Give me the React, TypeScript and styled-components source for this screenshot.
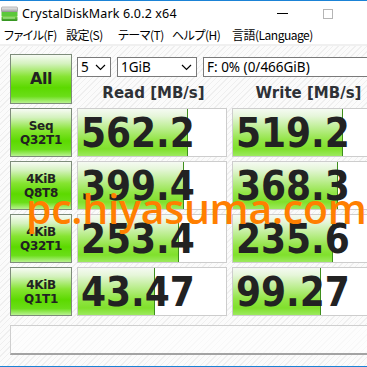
import React from "react";
import styled, { createGlobalStyle } from "styled-components";

const GlobalStyle = createGlobalStyle`
  html, body {
    margin: 0;
    padding: 0;
    overflow: hidden;
    background: #ffffff;
  }
  * { box-sizing: border-box; }
`;

const Window = styled.div`
  position: relative;
  width: 367px;
  height: 367px;
  overflow: hidden;
  border-top: 1px solid #1b83d6;
  border-bottom: 1px solid #1b83d6;
  background: #ffffff;
  font-family: "Noto Sans", "Noto Sans CJK JP", sans-serif;
`;

const TitleBar = styled.div`
  height: 25px;
  display: flex;
  align-items: center;
  padding-left: 1px;
  background: #ffffff;
`;

const TitleText = styled.span`
  margin-left: 4px;
  font-size: 12.5px;
  color: #000;
  letter-spacing: 0.15px;
`;

const WinButtons = styled.div`
  margin-left: auto;
  display: flex;
  align-items: center;
  gap: 35px;
  padding-right: 34px;
`;

const Minimize = styled.div`
  width: 11px;
  height: 1px;
  background: #000;
`;

const Maximize = styled.div`
  width: 10px;
  height: 10px;
  border: 1px solid #b5b5b5;
`;

const MenuBar = styled.div`
  height: 20px;
  display: flex;
  align-items: center;
  gap: 15px;
  padding-left: 4px;
  background: #ffffff;
  border-bottom: 2px solid #f0f0f0;
  font-family: "Noto Sans CJK JP", sans-serif;
  font-size: 12px;
  font-feature-settings: "palt";
  color: #000;
`;

const MenuItem = styled.span<{ $w: number }>`
  width: ${(p) => p.$w}px;
  white-space: nowrap;
  line-height: 1;
  letter-spacing: -0.5px;
`;

const Main = styled.div`
  position: relative;
  padding: 8px 0 0 10px;
  height: 320px;
  background: repeating-linear-gradient(
    135deg,
    #fbfbfb 0px,
    #fbfbfb 3px,
    #efefef 3px,
    #efefef 4px
  );
`;

const Grid = styled.div`
  display: grid;
  grid-template-columns: 62px 150px 150px;
  grid-template-rows: 50px repeat(4, 49px);
  column-gap: 5px;
  row-gap: 4px;
  width: 400px;
`;

const LabelButton = styled.div<{ $big?: boolean }>`
  border: 1px solid #7d8c7a;
  background: linear-gradient(
    to bottom,
    #f7fbf4 0%,
    #d4f2be 18%,
    #86e432 45%,
    #5cd900 68%,
    #6ade18 86%,
    #b8f290 100%
  );
  display: flex;
  flex-direction: column;
  align-items: center;
  justify-content: center;
  font-family: "DejaVu Sans", Verdana, sans-serif;
  font-weight: bold;
  color: #222;
  font-size: ${(p) => (p.$big ? "16px" : "12px")};
  line-height: 14px;
  letter-spacing: ${(p) => (p.$big ? "-0.5px" : "-0.3px")};
`;

const TopArea = styled.div`
  grid-column: 2 / span 2;
  display: flex;
  flex-direction: column;
  padding-top: 3px;
`;

const Selects = styled.div`
  display: flex;
  gap: 6px;
`;

const Select = styled.div<{ $w: number }>`
  width: ${(p) => p.$w}px;
  height: 20px;
  border: 1px solid #7a7a7a;
  background: #fff;
  display: flex;
  align-items: center;
  justify-content: space-between;
  padding: 0 4px 0 3px;
  font-family: "Noto Sans", sans-serif;
  font-size: 13.5px;
  color: #000;
  flex-shrink: 0;
`;

const Headers = styled.div`
  display: grid;
  grid-template-columns: 150px 150px;
  column-gap: 5px;
  margin-top: 6px;
`;

const Header = styled.div`
  text-align: center;
  font-family: "DejaVu Sans", Verdana, sans-serif;
  font-weight: bold;
  font-size: 15px;
  color: #2e3136;
  line-height: 20px;
  padding-left: 3px;
`;

const ValueBox = styled.div`
  position: relative;
  border: 1px solid #cdcdcd;
  background: #ffffff;
  display: flex;
  align-items: center;
  overflow: hidden;
`;

const Bar = styled.div`
  position: absolute;
  left: 0;
  top: 0;
  bottom: 0;
  border-right: 1px solid #3e8e1c;
  background: linear-gradient(
    to bottom,
    #f5faf2 0%,
    #e6f6da 15%,
    #bdee92 40%,
    #94e548 65%,
    #80e02c 85%,
    #9cea5e 100%
  );
`;

const Value = styled.span`
  position: relative;
  padding-left: 3px;
  font-family: "DejaVu Sans Condensed", "DejaVu Sans", sans-serif;
  font-stretch: condensed;
  font-weight: bold;
  font-size: 40px;
  line-height: 1;
  color: #222222;
`;

const Comment = styled.div`
  margin-top: 9px;
  height: 30px;
  width: 370px;
  border-top: 1px solid #cfcfcf;
  border-left: 1px solid #cfcfcf;
  border-bottom: 2px solid #a3a3a3;
  background: rgba(255, 255, 255, 0.55);
`;

const Watermark = styled.div`
  position: absolute;
  left: 26px;
  top: 142px;
  font-family: "Open Sans", "Noto Sans", sans-serif;
  font-weight: 600;
  font-size: 41px;
  line-height: 1;
  color: #ff7f00;
  letter-spacing: -0.3px;
  pointer-events: none;
  white-space: nowrap;
`;

const Chevron = () => (
  <svg width="11" height="7" viewBox="0 0 11 7">
    <path d="M1 1 L5.5 5.5 L10 1" fill="none" stroke="#000" strokeWidth="1.2" />
  </svg>
);

const DriveIcon = () => (
  <svg width="17" height="16" viewBox="0 0 17 16">
    <defs>
      <linearGradient id="top" x1="0" y1="0" x2="0" y2="1">
        <stop offset="0" stopColor="#f2f2f2" />
        <stop offset="1" stopColor="#9b9b9b" />
      </linearGradient>
      <linearGradient id="grn" x1="0" y1="0" x2="0" y2="1">
        <stop offset="0" stopColor="#7fd64f" />
        <stop offset="1" stopColor="#2e8f1c" />
      </linearGradient>
    </defs>
    <rect x="0.5" y="1" width="16" height="5" rx="1" fill="url(#top)" stroke="#8a8a8a" strokeWidth="0.6" />
    <rect x="0.5" y="6" width="16" height="4" fill="#5cc83a" />
    <rect x="0.5" y="10" width="16" height="5" rx="1" fill="url(#grn)" />
    <rect x="2" y="11.5" width="12" height="1" fill="#b8f0a0" />
  </svg>
);

type Row = { label: string[]; read: string; rw: number; write: string; ww: number };

const rows: Row[] = [
  { label: ["Seq", "Q32T1"], read: "562.2", rw: 74, write: "519.2", ww: 74 },
  { label: ["4KiB", "Q8T8"], read: "399.4", rw: 71.3, write: "368.3", ww: 70.7 },
  { label: ["4KiB", "Q32T1"], read: "253.4", rw: 68, write: "235.6", ww: 67.3 },
  { label: ["4KiB", "Q1T1"], read: "43.47", rw: 52, write: "99.27", ww: 59.3 },
];

const menu: [string, number][] = [
  ["ファイル(F)", 47],
  ["設定(S)", 37],
  ["テーマ(T)", 39],
  ["ヘルプ(H)", 45],
  ["言語(Language)", 90],
];

export default function App() {
  return (
    <Window>
      <GlobalStyle />
      <TitleBar>
        <DriveIcon />
        <TitleText>CrystalDiskMark 6.0.2 x64</TitleText>
        <WinButtons>
          <Minimize />
          <Maximize />
        </WinButtons>
      </TitleBar>
      <MenuBar>
        {menu.map(([m, w]) => (
          <MenuItem key={m} $w={w}>
            {m}
          </MenuItem>
        ))}
      </MenuBar>
      <Main>
        <Grid>
          <LabelButton $big>All</LabelButton>
          <TopArea>
            <Selects>
              <Select $w={34}>
                <span>5</span>
                <Chevron />
              </Select>
              <Select $w={80}>
                <span>1GiB</span>
                <Chevron />
              </Select>
              <Select $w={180}>
                <span>F: 0% (0/466GiB)</span>
              </Select>
            </Selects>
            <Headers>
              <Header>Read [MB/s]</Header>
              <Header>Write [MB/s]</Header>
            </Headers>
          </TopArea>
          {rows.map((r) => (
            <React.Fragment key={r.label.join("-")}>
              <LabelButton>
                <span>{r.label[0]}</span>
                <span>{r.label[1]}</span>
              </LabelButton>
              <ValueBox>
                <Bar style={{ width: `${r.rw}%` }} />
                <Value>{r.read}</Value>
              </ValueBox>
              <ValueBox>
                <Bar style={{ width: `${r.ww}%` }} />
                <Value>{r.write}</Value>
              </ValueBox>
            </React.Fragment>
          ))}
        </Grid>
        <Comment />
        <Watermark>pc.hiyasuma.com</Watermark>
      </Main>
    </Window>
  );
}
